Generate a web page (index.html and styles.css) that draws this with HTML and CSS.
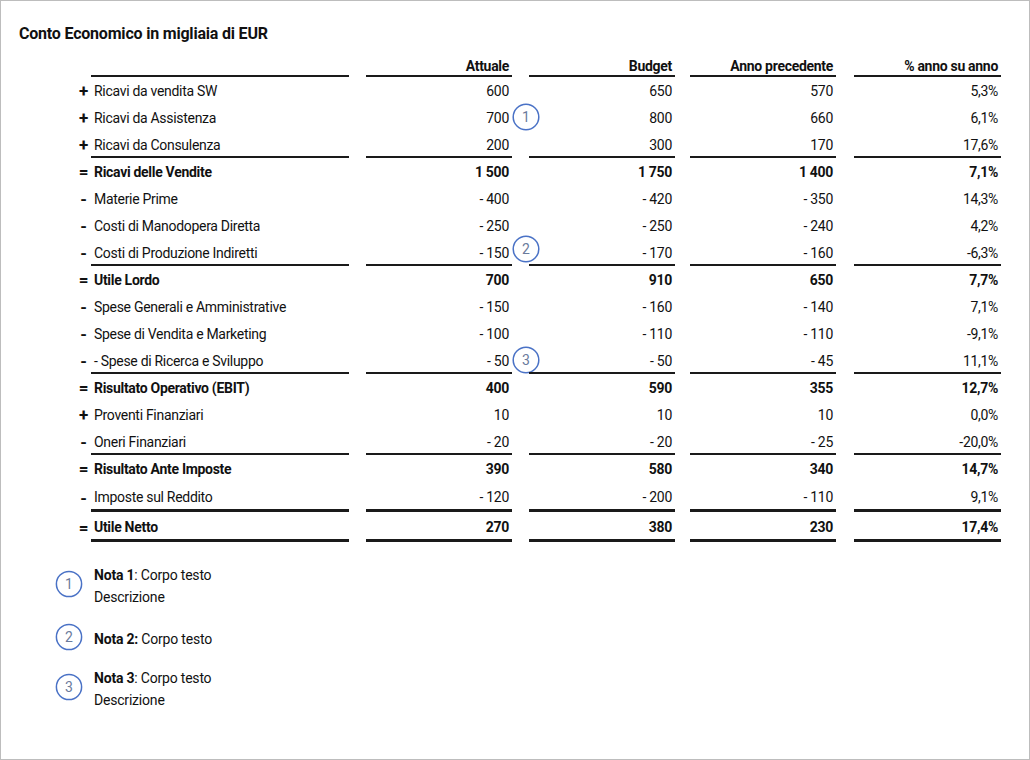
FILE: index.html
```html
<!DOCTYPE html>
<html lang="it">
<head>
<meta charset="utf-8">
<title>Conto Economico</title>
<link rel="stylesheet" href="styles.css">
</head>
<body>
<div class="frame">
  <h1 class="title">Conto Economico in migliaia di EUR</h1>

  <div class="pl">
    <div class="row head sep">
      <div class="sign"></div>
      <div class="cell label"></div>
      <div class="cell num">Attuale</div>
      <div class="cell num">Budget</div>
      <div class="cell num">Anno precedente</div>
      <div class="cell num">% anno su anno</div>
    </div>

    <div class="row">
      <div class="sign">+</div>
      <div class="cell label">Ricavi da vendita SW</div>
      <div class="cell num">600</div>
      <div class="cell num">650</div>
      <div class="cell num">570</div>
      <div class="cell num">5,3%</div>
    </div>
    <div class="row">
      <div class="sign">+</div>
      <div class="cell label">Ricavi da Assistenza</div>
      <div class="cell num">700<svg class="badge" width="28" height="28" viewBox="0 0 28 28"><circle cx="14" cy="14" r="12.8"/><text x="14" y="19">1</text></svg></div>
      <div class="cell num">800</div>
      <div class="cell num">660</div>
      <div class="cell num">6,1%</div>
    </div>
    <div class="row sep">
      <div class="sign">+</div>
      <div class="cell label">Ricavi da Consulenza</div>
      <div class="cell num">200</div>
      <div class="cell num">300</div>
      <div class="cell num">170</div>
      <div class="cell num">17,6%</div>
    </div>
    <div class="row total">
      <div class="sign">=</div>
      <div class="cell label">Ricavi delle Vendite</div>
      <div class="cell num">1 500</div>
      <div class="cell num">1 750</div>
      <div class="cell num">1 400</div>
      <div class="cell num">7,1%</div>
    </div>
    <div class="row">
      <div class="sign">-</div>
      <div class="cell label">Materie Prime</div>
      <div class="cell num">- 400</div>
      <div class="cell num">- 420</div>
      <div class="cell num">- 350</div>
      <div class="cell num">14,3%</div>
    </div>
    <div class="row">
      <div class="sign">-</div>
      <div class="cell label">Costi di Manodopera Diretta</div>
      <div class="cell num">- 250</div>
      <div class="cell num">- 250</div>
      <div class="cell num">- 240</div>
      <div class="cell num">4,2%</div>
    </div>
    <div class="row sep">
      <div class="sign">-</div>
      <div class="cell label">Costi di Produzione Indiretti</div>
      <div class="cell num">- 150<svg class="badge up" width="28" height="28" viewBox="0 0 28 28"><circle cx="14" cy="14" r="12.8"/><text x="14" y="19">2</text></svg></div>
      <div class="cell num">- 170</div>
      <div class="cell num">- 160</div>
      <div class="cell num">-6,3%</div>
    </div>
    <div class="row total">
      <div class="sign">=</div>
      <div class="cell label">Utile Lordo</div>
      <div class="cell num">700</div>
      <div class="cell num">910</div>
      <div class="cell num">650</div>
      <div class="cell num">7,7%</div>
    </div>
    <div class="row">
      <div class="sign">-</div>
      <div class="cell label">Spese Generali e Amministrative</div>
      <div class="cell num">- 150</div>
      <div class="cell num">- 160</div>
      <div class="cell num">- 140</div>
      <div class="cell num">7,1%</div>
    </div>
    <div class="row">
      <div class="sign">-</div>
      <div class="cell label">Spese di Vendita e Marketing</div>
      <div class="cell num">- 100</div>
      <div class="cell num">- 110</div>
      <div class="cell num">- 110</div>
      <div class="cell num">-9,1%</div>
    </div>
    <div class="row sep">
      <div class="sign">-</div>
      <div class="cell label">- Spese di Ricerca e Sviluppo</div>
      <div class="cell num">- 50<svg class="badge" width="28" height="28" viewBox="0 0 28 28"><circle cx="14" cy="14" r="12.8"/><text x="14" y="19">3</text></svg></div>
      <div class="cell num">- 50</div>
      <div class="cell num">- 45</div>
      <div class="cell num">11,1%</div>
    </div>
    <div class="row total">
      <div class="sign">=</div>
      <div class="cell label">Risultato Operativo (EBIT)</div>
      <div class="cell num">400</div>
      <div class="cell num">590</div>
      <div class="cell num">355</div>
      <div class="cell num">12,7%</div>
    </div>
    <div class="row">
      <div class="sign">+</div>
      <div class="cell label">Proventi Finanziari</div>
      <div class="cell num">10</div>
      <div class="cell num">10</div>
      <div class="cell num">10</div>
      <div class="cell num">0,0%</div>
    </div>
    <div class="row sep">
      <div class="sign">-</div>
      <div class="cell label">Oneri Finanziari</div>
      <div class="cell num">- 20</div>
      <div class="cell num">- 20</div>
      <div class="cell num">- 25</div>
      <div class="cell num">-20,0%</div>
    </div>
    <div class="row total">
      <div class="sign">=</div>
      <div class="cell label">Risultato Ante Imposte</div>
      <div class="cell num">390</div>
      <div class="cell num">580</div>
      <div class="cell num">340</div>
      <div class="cell num">14,7%</div>
    </div>
    <div class="row sep thick">
      <div class="sign">-</div>
      <div class="cell label">Imposte sul Reddito</div>
      <div class="cell num">- 120</div>
      <div class="cell num">- 200</div>
      <div class="cell num">- 110</div>
      <div class="cell num">9,1%</div>
    </div>
    <div class="row total sep thick">
      <div class="sign">=</div>
      <div class="cell label">Utile Netto</div>
      <div class="cell num">270</div>
      <div class="cell num">380</div>
      <div class="cell num">230</div>
      <div class="cell num">17,4%</div>
    </div>
  </div>

  <div class="notes">
    <div class="note">
      <svg class="nbadge" width="28" height="28" viewBox="0 0 28 28"><circle cx="14" cy="14" r="12.6"/><text x="14" y="19">1</text></svg>
      <p class="ntext"><b>Nota 1</b>: Corpo testo<br>Descrizione</p>
    </div>
    <div class="note">
      <svg class="nbadge" width="28" height="28" viewBox="0 0 28 28"><circle cx="14" cy="14" r="12.6"/><text x="14" y="19">2</text></svg>
      <p class="ntext"><b>Nota 2:</b> Corpo testo</p>
    </div>
    <div class="note third">
      <svg class="nbadge n3" width="28" height="28" viewBox="0 0 28 28"><circle cx="14" cy="14" r="12.6"/><text x="14" y="19">3</text></svg>
      <p class="ntext"><b>Nota 3</b>: Corpo testo<br>Descrizione</p>
    </div>
  </div>
</div>
</body>
</html>
```
FILE: styles.css
```css
* { box-sizing: border-box; }

html, body {
  margin: 0;
  padding: 0;
  background: #ffffff;
}

body {
  font-family: Roboto, "Liberation Sans", sans-serif;
  color: #111111;
}

.frame {
  width: 1030px;
  height: 760px;
  border: 1px solid #bdbdbd;
  padding: 22px 0 0 0;
  overflow: hidden;
}

.title {
  margin: 0 0 10px 18px;
  font-size: 16px;
  line-height: 22px;
  font-weight: 700;
  letter-spacing: -0.2px;
}

.pl {
  margin-left: 77px;
}

.row {
  display: grid;
  grid-template-columns: 13px 258px 163px 163px 161px 165px;
  height: 27px;
  font-size: 14px;
  letter-spacing: -0.3px;
}

.row.head {
  height: 22px;
  font-weight: 700;
}

.row.head .cell {
  padding-top: 2px;
}

.sign {
  display: flex;
  align-items: center;
  justify-content: center;
  font-weight: 700;
  font-size: 17px;
  padding-top: 1px;
  margin-left: -2px;
}

.cell {
  display: flex;
  align-items: center;
  padding-top: 2px;
  border-bottom: 2px solid transparent;
}

.label {
  padding-left: 3px;
}

.num {
  justify-content: flex-end;
  padding-right: 3px;
  margin-left: 17px;
  position: relative;
}

.row .num:nth-child(5) { margin-left: 15px; }
.row .num:nth-child(6) { margin-left: 18px; }

.row.sep .cell {
  border-bottom-color: #1a1a1a;
}

.row.thick {
  height: 30px;
}

.row.thick .cell {
  border-bottom-width: 3px;
}

.row.total {
  font-weight: 700;
}

.badge {
  position: absolute;
  left: 100%;
  top: 50%;
  margin-top: -14px;
  font-weight: 400;
}

.badge.up {
  margin-top: -17px;
}

.badge circle,
.nbadge circle {
  fill: #ffffff;
  stroke: #4a72c6;
  stroke-width: 1.5;
}

.badge text,
.nbadge text {
  fill: #6a7b9c;
  font-family: Roboto, "Liberation Sans", sans-serif;
  font-size: 14px;
  text-anchor: middle;
  letter-spacing: 0;
}

.notes {
  margin: 22px 0 0 54px;
  display: flex;
  flex-direction: column;
  gap: 20px;
}

.note {
  display: flex;
  align-items: center;
  gap: 11px;
}

.note.third {
  margin-top: -3px;
}

.nbadge {
  flex: none;
  position: relative;
  top: -2px;
  margin: -3px 0;
}

.ntext {
  margin: 0;
  font-size: 14px;
  line-height: 22px;
  letter-spacing: -0.2px;
}

.ntext b {
  font-weight: 700;
}
```
